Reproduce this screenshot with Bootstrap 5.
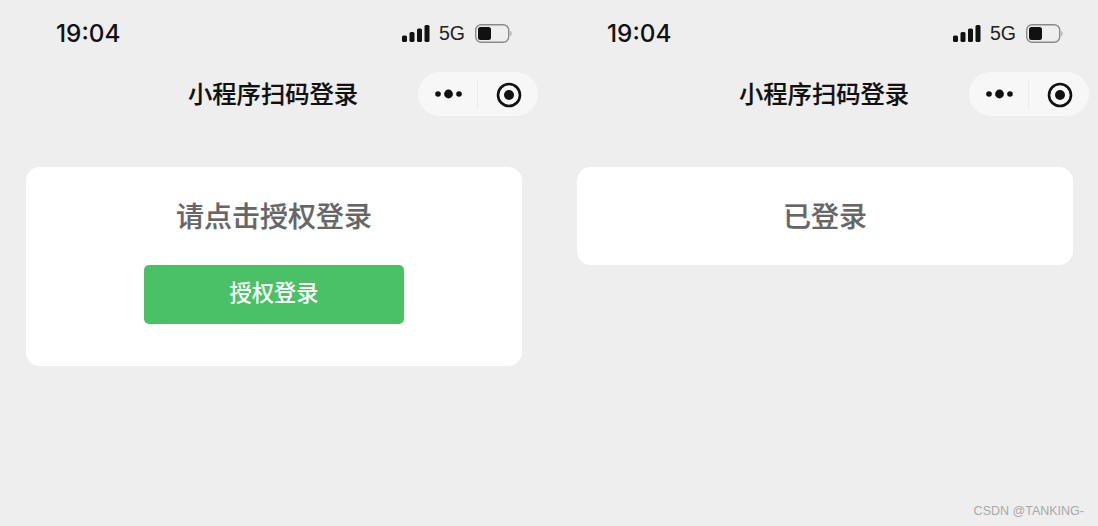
<!DOCTYPE html>
<html lang="zh-CN">
<head>
  <meta charset="UTF-8">
  <meta name="viewport" content="width=device-width, initial-scale=1.0">
  <title>小程序扫码登录</title>
  <link rel="stylesheet" href="https://cdn.jsdelivr.net/npm/bootstrap@5.3.0/dist/css/bootstrap.min.css">
  <style>
    html, body {
      height: 526px;
      overflow: hidden;
    }
    body {
      background: #eeeeee;
      font-family: "Liberation Sans", "Noto Sans CJK SC", sans-serif;
      color: #111;
    }
    .phone {
      width: 551px;
      flex: none;
      padding-left: 26px;
    }
    .status-row {
      height: 72px;
      padding: 19px 39px 0 30px;
    }
    .clock {
      font-family: "Inter", "Liberation Sans", sans-serif;
      font-size: 24.3px;
      font-weight: 500;
      line-height: 28px;
    }
    .net-label {
      font-size: 19.5px;
      line-height: 28px;
      color: #222;
      margin: 0 10px 0 9px;
    }
    .title-row {
      height: 44px;
      margin-bottom: 51px;
      width: 512px;
    }
    .page-title {
      font-size: 24.3px;
      font-weight: 500;
      margin: 0 0 0 162px;
      padding-top: 2px;
      line-height: 44px;
      -webkit-text-stroke: 0.2px #111;
    }
    .capsule {
      width: 120px;
      height: 44px;
      margin-left: auto;
      background: #f7f7f7;
      border-radius: 22px;
    }
    .capsule-half {
      width: 60px;
      height: 100%;
    }
    .capsule-half.target-side {
      padding: 1px 0 0 2px;
    }
    .capsule-split {
      width: 1px;
      height: 30px;
      flex: none;
      background: #ededed;
    }
    .login-panel {
      width: 496px;
      background: #fff;
      border: 0;
      border-radius: 14px;
    }
    .panel-heading {
      font-size: 28px;
      font-weight: 500;
      line-height: 40px;
      color: #666;
      margin: 0;
      padding: 31px 0 27px;
      -webkit-text-stroke: 0.2px #666;
    }
    .auth-btn {
      width: 260px;
      height: 59px;
      margin-bottom: 42px;
      background: #4ac166;
      border: 0;
      border-radius: 5px;
      color: #fff;
      font-size: 22.3px;
      font-weight: 500;
      padding: 0 0 2px;
    }
    .watermark {
      position: absolute;
      right: 14px;
      bottom: 7px;
      font-size: 12.5px;
      line-height: 16px;
      color: #a9a9a9;
    }
  </style>
</head>
<body>
  <div class="d-flex">
    <div class="phone">
      <div class="status-row d-flex align-items-start justify-content-between">
        <span class="clock">19:04</span>
        <div class="d-flex align-items-center">
          <svg width="28" height="19" viewBox="0 0 28 19"><g fill="#111"><rect x="0" y="11.5" width="5" height="6.5" rx="1.5"/><rect x="7.5" y="8" width="5" height="10" rx="1.5"/><rect x="15" y="4.5" width="5" height="13.5" rx="1.5"/><rect x="22.5" y="1" width="5" height="17" rx="1.5"/></g></svg>
          <span class="net-label">5G</span>
          <svg width="37" height="19" viewBox="0 0 37 19"><rect x="0.7" y="0.7" width="33" height="17.6" rx="5.5" fill="none" stroke="#8a8a8a" stroke-width="1.4"/><rect x="3" y="3" width="13" height="13" rx="2.5" fill="#111"/><path d="M35.5 7c1.2.6 1.2 4.4 0 5z" fill="#8a8a8a"/></svg>
        </div>
      </div>
      <div class="title-row d-flex align-items-center">
        <h1 class="page-title">小程序扫码登录</h1>
        <div class="capsule d-flex align-items-center">
          <div class="capsule-half d-flex align-items-center justify-content-center">
            <svg width="28" height="10" viewBox="0 0 28 10"><g fill="#111"><circle cx="4" cy="5" r="2.8"/><circle cx="14.5" cy="5" r="4.4"/><circle cx="25" cy="5" r="2.8"/></g></svg>
          </div>
          <div class="capsule-split"></div>
          <div class="capsule-half target-side d-flex align-items-center justify-content-center">
            <svg width="26" height="26" viewBox="0 0 26 26"><circle cx="13" cy="13" r="11" fill="none" stroke="#111" stroke-width="2.6"/><circle cx="13" cy="13" r="5" fill="#111"/></svg>
          </div>
        </div>
      </div>
      <div class="card login-panel text-center align-items-center">
        <h2 class="panel-heading">请点击授权登录</h2>
        <button type="button" class="btn auth-btn">授权登录</button>
      </div>
    </div>

    <div class="phone">
      <div class="status-row d-flex align-items-start justify-content-between">
        <span class="clock">19:04</span>
        <div class="d-flex align-items-center">
          <svg width="28" height="19" viewBox="0 0 28 19"><g fill="#111"><rect x="0" y="11.5" width="5" height="6.5" rx="1.5"/><rect x="7.5" y="8" width="5" height="10" rx="1.5"/><rect x="15" y="4.5" width="5" height="13.5" rx="1.5"/><rect x="22.5" y="1" width="5" height="17" rx="1.5"/></g></svg>
          <span class="net-label">5G</span>
          <svg width="37" height="19" viewBox="0 0 37 19"><rect x="0.7" y="0.7" width="33" height="17.6" rx="5.5" fill="none" stroke="#8a8a8a" stroke-width="1.4"/><rect x="3" y="3" width="13" height="13" rx="2.5" fill="#111"/><path d="M35.5 7c1.2.6 1.2 4.4 0 5z" fill="#8a8a8a"/></svg>
        </div>
      </div>
      <div class="title-row d-flex align-items-center">
        <h1 class="page-title">小程序扫码登录</h1>
        <div class="capsule d-flex align-items-center">
          <div class="capsule-half d-flex align-items-center justify-content-center">
            <svg width="28" height="10" viewBox="0 0 28 10"><g fill="#111"><circle cx="4" cy="5" r="2.8"/><circle cx="14.5" cy="5" r="4.4"/><circle cx="25" cy="5" r="2.8"/></g></svg>
          </div>
          <div class="capsule-split"></div>
          <div class="capsule-half target-side d-flex align-items-center justify-content-center">
            <svg width="26" height="26" viewBox="0 0 26 26"><circle cx="13" cy="13" r="11" fill="none" stroke="#111" stroke-width="2.6"/><circle cx="13" cy="13" r="5" fill="#111"/></svg>
          </div>
        </div>
      </div>
      <div class="card login-panel text-center align-items-center">
        <h2 class="panel-heading">已登录</h2>
      </div>
    </div>
  </div>
  <div class="watermark">CSDN @TANKING-</div>

  <script src="https://cdn.jsdelivr.net/npm/bootstrap@5.3.0/dist/js/bootstrap.bundle.min.js"></script>
</body>
</html>
